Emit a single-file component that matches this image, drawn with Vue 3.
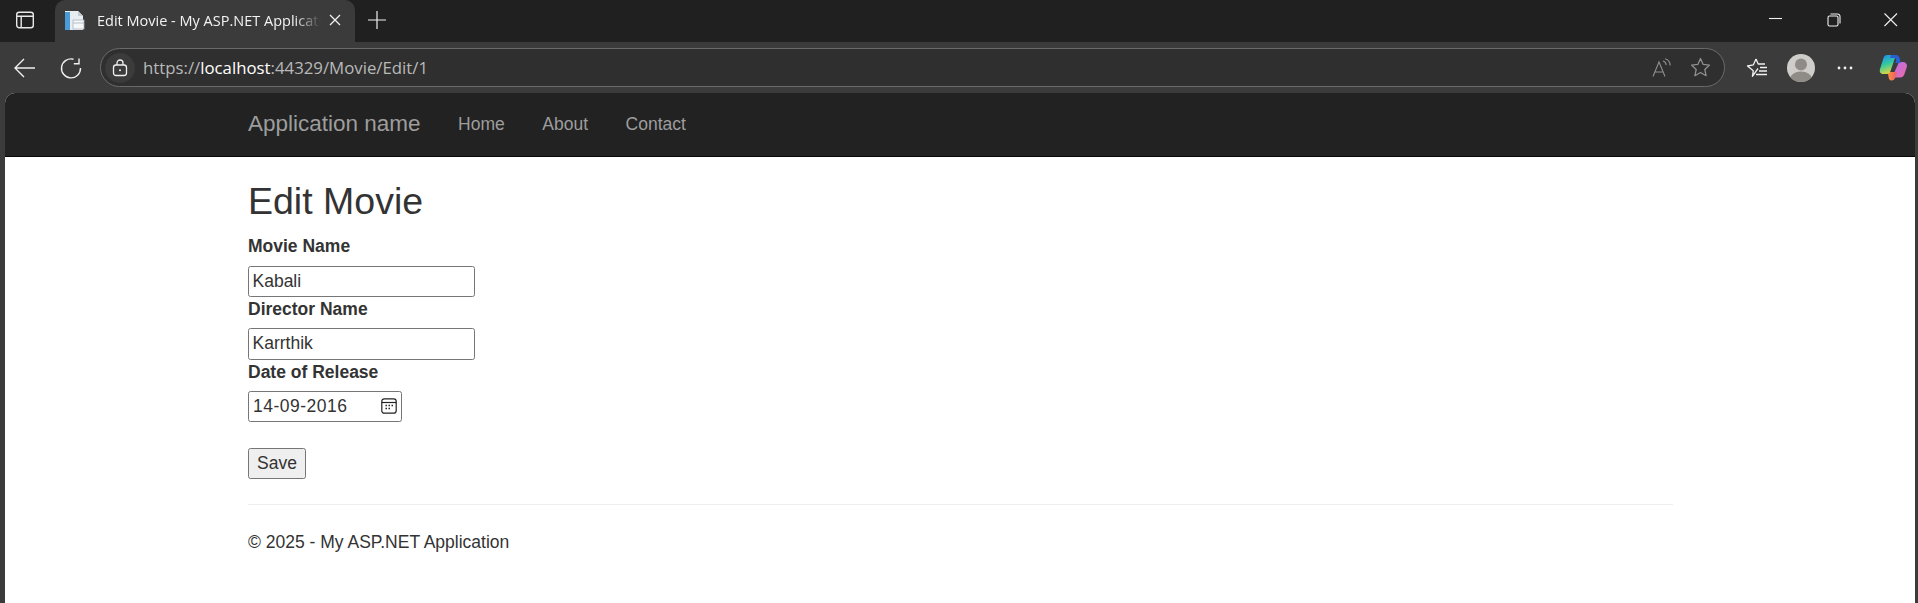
<script setup>
const navLinks = ['Home', 'About', 'Contact']
const fields = [
  { label: 'Movie Name', value: 'Kabali' },
  { label: 'Director Name', value: 'Karrthik' },
]
</script>

<template>
  <div class="window">
    <div class="tabstrip">
      <button class="strip-btn">
        <svg width="20" height="20" viewBox="0 0 20 20" fill="none" stroke="#e8e8e8" stroke-width="1.4">
          <rect x="1.7" y="2.2" width="16.6" height="15.6" rx="2.5" />
          <path d="M1.7 6.2h16.6M6.2 6.2v11.6" />
        </svg>
      </button>
      <div class="tab">
        <svg class="favicon" width="21" height="21" viewBox="0 0 21 21">
          <path d="M1 1h13l5 5v14H1z" fill="#e8edf2" />
          <rect x="1" y="2" width="5" height="18" fill="#4a9bd8" />
          <path d="M14 1l5 5h-5z" fill="#c4ccd4" />
          <rect x="9" y="10" width="11" height="9" fill="#f4f6f8" stroke="#aab4bd" stroke-width=".8" />
          <path d="M9 13h11" stroke="#aab4bd" stroke-width=".8" />
        </svg>
        <span class="tab-title">Edit Movie - My ASP.NET Application</span>
        <svg class="tab-close" width="12" height="12" viewBox="0 0 12 12" stroke="#f0f0f0" stroke-width="1.3">
          <path d="M1 1l10 10M11 1L1 11" />
        </svg>
      </div>
      <svg class="new-tab" width="18" height="18" viewBox="0 0 18 18" stroke="#f0f0f0" stroke-width="1.2">
        <path d="M9 0v18M0 9h18" />
      </svg>
      <div class="window-controls">
        <svg width="14" height="14" viewBox="0 0 14 14" stroke="#f0f0f0" stroke-width="1.1">
          <path d="M0 5.5h13" />
        </svg>
        <svg width="14" height="14" viewBox="0 0 14 14" fill="none" stroke="#f0f0f0" stroke-width="1.1">
          <rect x="1" y="3" width="10" height="10" rx="1.5" />
          <path d="M3.5 1h7a2.5 2.5 0 0 1 2.5 2.500v7" />
        </svg>
        <svg width="14" height="14" viewBox="0 0 14 14" stroke="#f0f0f0" stroke-width="1.1">
          <path d="M.5.500l12.500 12.500M13 .500L.5 13" />
        </svg>
      </div>
    </div>

    <div class="toolbar">
      <svg class="tool back" width="22" height="22" viewBox="0 0 22 22" fill="none" stroke="#f0f0f0" stroke-width="1.4">
        <path d="M1 11h20M10 2l-9 9 9 9" />
      </svg>
      <svg class="tool reload" width="22" height="22" viewBox="0 0 22 22" fill="none" stroke="#f0f0f0" stroke-width="1.4">
        <path d="M13.500 2.200A9.500 9.500 0 1 0 20.500 11" />
        <path d="M19 1.500v5.200h-5.200" />
      </svg>
      <div class="address">
        <span class="lock-wrap">
          <svg width="16" height="18" viewBox="0 0 16 18" fill="none" stroke="#f0f0f0" stroke-width="1.3">
            <rect x="1.500" y="6" width="13" height="10.500" rx="2.500" />
            <path d="M5 6V4a3 3 0 0 1 6 0v2" />
            <circle cx="8" cy="11.200" r="1" fill="#f0f0f0" stroke="none" />
          </svg>
        </span>
        <span class="url">https://<b>localhost</b>:44329/Movie/Edit/1</span>
        <svg class="read-aloud" width="20" height="20" viewBox="0 0 20 20" fill="none" stroke="#8f8f8f" stroke-width="1.1">
          <path d="M1 18.500L7 4l6 14.500M3 14h8" />
          <path d="M11 3c2 .5 3 2 3.200 4M13 .800c3 .7 5 3.200 5.200 6.700" />
        </svg>
        <svg class="addr-star" width="21" height="21" viewBox="0 0 21 21" fill="none" stroke="#8f8f8f" stroke-width="1.3" stroke-linejoin="round">
          <path d="M10.500 1.500l2.700 5.900 6.300.7-4.700 4.300 1.300 6.300-5.600-3.200-5.600 3.200 1.300-6.300L1.500 8.100l6.300-.7z" />
        </svg>
      </div>
      <svg class="tool fav" width="22" height="20" viewBox="0 0 22 20" fill="none" stroke="#f0f0f0" stroke-width="1.3" stroke-linejoin="round">
        <path d="M10 1l2.200 5H19M12 10.500l-5.600 7.800.9-5.600L1.500 8l5.900-1.200L10 1" />
        <path d="M14 9.500h7M13 13h8M10 16.500h11" />
      </svg>
      <svg class="avatar" width="28" height="28" viewBox="0 0 28 28">
        <clipPath id="avatarClip"><circle cx="14" cy="14" r="14" /></clipPath>
        <g clip-path="url(#avatarClip)">
          <rect width="28" height="28" fill="#cfcdc9" />
          <circle cx="14" cy="10.500" r="6" fill="#8f8c88" />
          <ellipse cx="14" cy="25" rx="11" ry="7.500" fill="#8f8c88" />
        </g>
      </svg>
      <svg class="tool more" width="16" height="4" viewBox="0 0 16 4" fill="#f0f0f0">
        <circle cx="2" cy="2" r="1.400" />
        <circle cx="8" cy="2" r="1.400" />
        <circle cx="14" cy="2" r="1.400" />
      </svg>
      <svg class="copilot" width="28" height="27" viewBox="0 0 28 27">
        <defs>
          <linearGradient id="copA" x1="0.2" y1="0" x2="0.5" y2="1">
            <stop offset="0" stop-color="#1b8fe8" />
            <stop offset=".5" stop-color="#35c9a0" />
            <stop offset="1" stop-color="#e6d83c" />
          </linearGradient>
          <linearGradient id="copB" x1="0" y1="0" x2="1" y2="1">
            <stop offset="0" stop-color="#b56ee8" />
            <stop offset="1" stop-color="#ee6aa8" />
          </linearGradient>
          <linearGradient id="copC" x1="0" y1="0" x2="1" y2="0">
            <stop offset="0" stop-color="#f8903c" />
            <stop offset="1" stop-color="#f05a6a" />
          </linearGradient>
        </defs>
        <path d="M20 8h4c3 0 4.500 2.500 3.800 5l-2.300 7c-.8 2.500-2.500 3.500-4.500 3.500h-8z" fill="url(#copB)" />
        <path d="M9 18h9l-1.500 5c-.8 2.500-2 3.500-4 3.500-2.500 0-3-2-3.500-8.500z" fill="url(#copC)" />
        <path d="M8 1h9l-5.500 16c-.7 2-1.800 3-3.500 3H4.500C1.500 20 .2 18 1 15L4.500 4C5 2 6.300 1 8 1z" fill="url(#copA)" />
        <path d="M12 1h5c2 0 3.200 1.500 3.700 3.500L21.800 9H16.300L17 7c.5-2-.5-3-2-3h-4z" fill="#2a5fd0" />
      </svg>
    </div>

    <div class="page">
      <nav class="navbar">
        <a class="brand">Application name</a>
        <a v-for="link in navLinks" :key="link" class="nav-link">{{ link }}</a>
      </nav>
      <main class="content">
        <h2>Edit Movie</h2>
        <div v-for="field in fields" :key="field.label" class="field">
          <label>{{ field.label }}</label>
          <input type="text" :value="field.value" />
        </div>
        <div class="field">
          <label>Date of Release</label>
          <div class="date-input">
            <span>14-09-2016</span>
            <svg width="16" height="16" viewBox="0 0 16 16" fill="none" stroke="#222" stroke-width="1.200">
              <rect x=".8" y=".8" width="14.400" height="14.400" rx="2.500" />
              <path d="M.8 4.500h14.400" />
              <path d="M4.500 7.500h1.500M7.500 7.500h1.500M10.500 7.500h1.500M4.500 10.500h1.500M7.500 10.500h1.500" stroke-width="1.500" />
            </svg>
          </div>
        </div>
        <button class="save">Save</button>
        <hr />
        <footer>© 2025 - My ASP.NET Application</footer>
      </main>
    </div>
  </div>
</template>

<style scoped>
.window {
  width: 1918px;
  height: 603px;
  overflow: hidden;
  background: #3b3b3b;
  display: flex;
  flex-direction: column;
  font-family: "Liberation Sans", Arial, sans-serif;
}

.tabstrip {
  height: 42px;
  background: #202020;
  display: flex;
  align-items: center;
  flex-shrink: 0;
}

.strip-btn {
  width: 55px;
  height: 40px;
  padding: 0 0 0 15px;
  display: flex;
  align-items: center;
  background: none;
  border: none;
  margin-bottom: 2px;
}

.tab {
  width: 300px;
  height: 42px;
  background: #3b3b3b;
  border-radius: 10px 10px 0 0;
  display: flex;
  align-items: center;
  padding: 0 0 2px 9px;
  box-sizing: border-box;
}

.favicon {
  flex-shrink: 0;
}

.tab-title {
  width: 224px;
  margin-left: 12px;
  font: 14.500px "Open Sans", sans-serif;
  color: #f2f2f2;
  white-space: nowrap;
  overflow: hidden;
  -webkit-mask-image: linear-gradient(to right, #000 88%, transparent);
  mask-image: linear-gradient(to right, #000 88%, transparent);
}

.tab-close {
  margin-left: 8px;
}

.new-tab {
  margin-left: 13px;
  margin-bottom: 2px;
}

.window-controls {
  margin-left: auto;
  width: 129px;
  padding-right: 20px;
  margin-bottom: 2px;
  display: flex;
  justify-content: space-between;
}

.toolbar {
  height: 51px;
  display: flex;
  align-items: center;
  flex-shrink: 0;
}

.back {
  margin-left: 14px;
}

.reload {
  margin-left: 24px;
}

.address {
  margin-left: 18px;
  width: 1625px;
  height: 39px;
  box-sizing: border-box;
  border: 1px solid #6a6a6a;
  border-radius: 20px;
  background: #2f2f2f;
  display: flex;
  align-items: center;
}

.lock-wrap {
  width: 30px;
  height: 30px;
  margin-left: 4px;
  border-radius: 50%;
  background: #3b3b3b;
  display: flex;
  align-items: center;
  justify-content: center;
}

.url {
  margin-left: 8px;
  font: 16.800px "Open Sans", sans-serif;
  color: #b9b9b9;
}

.url b {
  font-weight: 400;
  color: #fff;
}

.read-aloud {
  margin-left: auto;
}

.addr-star {
  margin-left: 18px;
  margin-right: 13px;
}

.fav {
  margin-left: 21px;
}

.avatar {
  margin-left: 19px;
}

.more {
  margin-left: 22px;
}

.copilot {
  margin-left: 26px;
}

.page {
  flex: 1;
  margin: 0 3px 0 5px;
  background: #fff;
  border-radius: 10px 10px 0 0;
  overflow: hidden;
}

.navbar {
  height: 62.500px;
  box-sizing: content-box;
  background: #222;
  border-bottom: 1px solid #080808;
  padding-left: 243px;
  display: flex;
  align-items: center;
}

.brand {
  font-size: 22.500px;
  color: #9d9d9d;
  margin-right: 18.750px;
}

.nav-link {
  font-size: 17.500px;
  color: #9d9d9d;
  padding: 0 18.750px;
}

.content {
  margin: 0 242px 0 243px;
  font-size: 17.500px;
  line-height: 25px;
  color: #333;
}

h2 {
  margin: 24.250px 0 12.500px;
  font-size: 37.500px;
  font-weight: 500;
  line-height: 41.250px;
}

.field {
  display: flex;
  flex-direction: column;
  align-items: flex-start;
}

label {
  font-weight: 700;
  margin-bottom: 6.250px;
}

h2 + .field label {
  margin-top: -.5px;
  margin-bottom: 6.750px;
}

input,
.date-input {
  box-sizing: border-box;
  height: 31.250px;
  border: 1px solid #767676;
  border-radius: 2.500px;
  padding: 0 3.500px;
  font: 17.500px "Liberation Sans", Arial, sans-serif;
  color: #333;
  background: #fff;
}

input {
  width: 227px;
  outline: none;
}

.date-input {
  width: 154px;
  display: flex;
  align-items: center;
  justify-content: space-between;
  letter-spacing: .5px;
  padding: 0 4px;
}

.save {
  display: block;
  margin-top: 25.750px;
  width: 58px;
  height: 31.250px;
  padding: 0;
  border: 1px solid #767676;
  border-radius: 2.500px;
  background: #efefef;
  font: 17.500px "Liberation Sans", Arial, sans-serif;
  color: #333;
}

hr {
  margin: 25px 0;
  border: none;
  border-top: 1px solid #eee;
}

footer {
  color: #333;
}
</style>

<style>
html,
body {
  margin: 0;
  overflow: hidden;
}
</style>
